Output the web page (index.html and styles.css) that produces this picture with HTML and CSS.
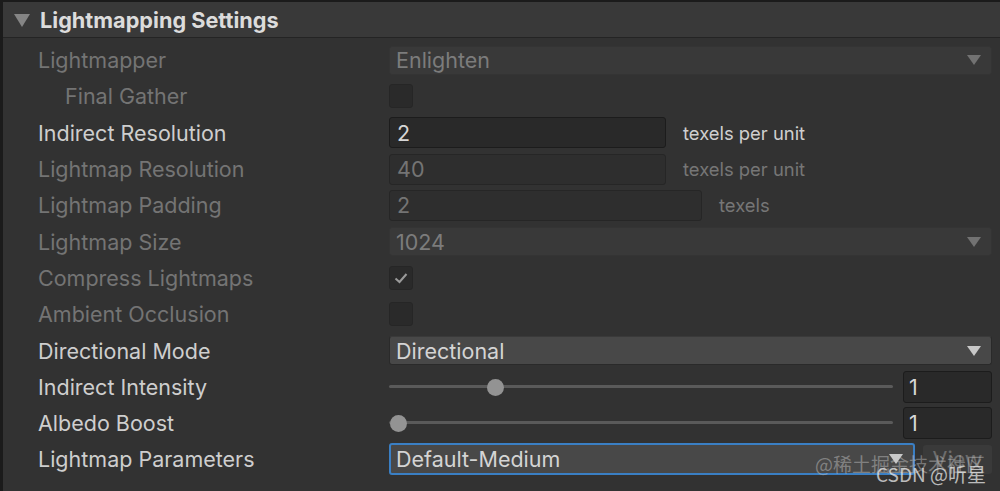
FILE: index.html
```html
<!DOCTYPE html>
<html lang="en">
<head>
  <meta charset="UTF-8">
  <meta name="viewport" content="width=device-width, initial-scale=1.0">
  <title>Lightmapping Settings</title>
  <link rel="stylesheet" href="styles.css">
</head>
<body>
  <div class="panel">
    <div class="header">
      <span class="foldout"></span>
      <span class="title">Lightmapping Settings</span>
    </div>

    <div class="rows">
      <div class="row disabled">
        <div class="label">Lightmapper</div>
        <div class="control"><div class="dropdown"><span>Enlighten</span><i class="arrow"></i></div></div>
      </div>
      <div class="row disabled">
        <div class="label indent">Final Gather</div>
        <div class="control"><div class="checkbox"></div></div>
      </div>
      <div class="row">
        <div class="label">Indirect Resolution</div>
        <div class="control">
          <div class="field short">2</div>
          <span class="unit">texels per unit</span>
        </div>
      </div>
      <div class="row disabled">
        <div class="label">Lightmap Resolution</div>
        <div class="control">
          <div class="field short">40</div>
          <span class="unit">texels per unit</span>
        </div>
      </div>
      <div class="row disabled">
        <div class="label">Lightmap Padding</div>
        <div class="control">
          <div class="field medium">2</div>
          <span class="unit">texels</span>
        </div>
      </div>
      <div class="row disabled">
        <div class="label">Lightmap Size</div>
        <div class="control"><div class="dropdown"><span>1024</span><i class="arrow"></i></div></div>
      </div>
      <div class="row disabled">
        <div class="label">Compress Lightmaps</div>
        <div class="control">
          <div class="checkbox">
            <svg viewBox="0 0 24 24" width="24" height="24"><path d="M6.5 12.5 L10.5 16 L17.5 8" fill="none" stroke="#9a9a9a" stroke-width="2"/></svg>
          </div>
        </div>
      </div>
      <div class="row disabled">
        <div class="label">Ambient Occlusion</div>
        <div class="control"><div class="checkbox"></div></div>
      </div>
      <div class="row">
        <div class="label">Directional Mode</div>
        <div class="control"><div class="dropdown"><span>Directional</span><i class="arrow"></i></div></div>
      </div>
      <div class="row">
        <div class="label">Indirect Intensity</div>
        <div class="control">
          <div class="slider"><div class="track"></div><div class="thumb" style="left: 19.3%"></div></div>
          <div class="field number">1</div>
        </div>
      </div>
      <div class="row">
        <div class="label">Albedo Boost</div>
        <div class="control">
          <div class="slider"><div class="track"></div><div class="thumb" style="left: 0%"></div></div>
          <div class="field number">1</div>
        </div>
      </div>
      <div class="row">
        <div class="label">Lightmap Parameters</div>
        <div class="control">
          <div class="dropdown focused"><span>Default-Medium</span><i class="arrow"></i></div>
          <div class="button">View</div>
        </div>
      </div>
    </div>

    <div class="watermark">
      <span class="wm-juejin">@稀土掘金技术社区</span>
      <span class="wm-csdn">CSDN @听星</span>
    </div>
  </div>
</body>
</html>
```

FILE: styles.css
```css
body {
  margin: 0;
  background: #1b1b1b;
  font-family: Inter, "Noto Sans", sans-serif;
  height: 491px;
  overflow: hidden;
}

.panel {
  position: relative;
  margin: 2px 0 0 3px;
  height: 489px;
  background: #323232;
}

.header {
  height: 35px;
  display: flex;
  align-items: center;
  background: #393939;
  border-bottom: 1px solid #242424;
}

.foldout {
  width: 0;
  height: 0;
  margin-left: 11px;
  margin-top: 2px;
  border-left: 8px solid transparent;
  border-right: 8px solid transparent;
  border-top: 13px solid #858585;
}

.title {
  margin-left: 10px;
  font-size: 21.7px;
  font-weight: 700;
  color: #dcdcdc;
}

.rows {
  padding-top: 4px;
}

.row {
  height: 36.3px;
  display: grid;
  grid-template-columns: 386px 1fr;
  align-items: center;
  padding-right: 8px;
}

.label {
  padding-left: 35px;
  font-size: 21.5px;
  color: #cecece;
}

.label.indent {
  padding-left: 62px;
}

.row.disabled .label {
  color: #747474;
}

.control {
  display: flex;
  align-items: center;
  height: 100%;
}

.dropdown {
  flex: 1;
  height: 29px;
  box-sizing: border-box;
  display: flex;
  align-items: center;
  justify-content: space-between;
  padding: 0 10px 0 6px;
  background: #484848;
  border: 1px solid #2a2a2a;
  border-top-color: #3a3a3a;
  border-radius: 3px;
  font-size: 21.5px;
  color: #d4d4d4;
}

.row.disabled .dropdown {
  background: #393939;
  border-color: #343434;
  color: #7c7c7c;
}

.dropdown.focused {
  height: 32px;
  border: 2px solid #3a7fc4;
  padding-left: 5px;
}

.arrow {
  width: 0;
  height: 0;
  border-left: 7px solid transparent;
  border-right: 7px solid transparent;
  border-top: 10px solid #c8c8c8;
}

.row.disabled .arrow {
  border-top-color: #727272;
}

.checkbox {
  width: 24px;
  height: 24px;
  box-sizing: border-box;
  background: #2a2a2a;
  border: 1px solid #262626;
  border-radius: 3px;
}

.checkbox svg {
  display: block;
  margin: -1px;
}

.field {
  height: 31px;
  box-sizing: border-box;
  display: flex;
  align-items: center;
  padding-left: 7px;
  background: #292929;
  border: 1px solid #1c1c1c;
  border-radius: 3px;
  font-size: 21.5px;
  color: #d6d6d6;
}

.row.disabled .field {
  background: #2e2e2e;
  border-color: #262626;
  color: #747474;
}

.field.short {
  width: 277px;
}

.field.medium {
  width: 313px;
}

.field.number {
  width: 89px;
  height: 32px;
  margin-left: 10px;
  padding-left: 5px;
}

.unit {
  margin-left: 17px;
  font-size: 18.4px;
  color: #cfcfcf;
}

.row.disabled .unit {
  color: #767676;
}

.slider {
  position: relative;
  flex: 1;
  height: 16px;
}

.track {
  position: absolute;
  left: 0;
  right: 0;
  top: 6px;
  height: 3px;
  background: #5a5a5a;
  border-radius: 2px;
}

.thumb {
  position: absolute;
  top: 0;
  width: 17px;
  height: 17px;
  margin-left: 1px;
  border-radius: 50%;
  background: #939393;
}

.button {
  width: 69px;
  height: 29px;
  margin-left: 8px;
  box-sizing: border-box;
  display: flex;
  align-items: center;
  justify-content: center;
  background: #3a3a3a;
  border-radius: 3px;
  font-size: 21.5px;
  color: #6c6c6c;
}

.watermark {
  position: absolute;
  right: 14px;
  bottom: 8px;
  display: flex;
  flex-direction: column;
  align-items: flex-end;
  line-height: 1;
  font-family: "Noto Sans CJK SC", sans-serif;
}

.wm-juejin {
  font-size: 19px;
  color: rgba(200, 200, 200, 0.45);
  margin-right: 1px;
}

.wm-csdn {
  margin-top: -9px;
  font-size: 19px;
  color: rgba(235, 235, 235, 0.75);
}
```
